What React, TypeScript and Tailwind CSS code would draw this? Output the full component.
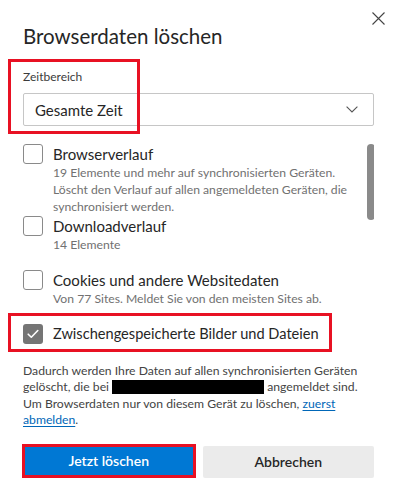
const Checkbox = ({ checked = false }: { checked?: boolean }) => {
	if (checked) {
		return (
			<span className="flex size-5 shrink-0 items-center justify-center rounded-[3px] bg-[#757575]">
				<svg width="12" height="10" viewBox="0 0 12 10" fill="none">
					<path d="M1.2 5.2 L4.3 8.2 L10.8 1.5" stroke="white" strokeWidth="1.6" strokeLinecap="round" strokeLinejoin="round" />
				</svg>
			</span>
		);
	}
	return <span className="size-5 shrink-0 rounded-[3px] border border-[#8a8a8a] bg-white" />;
};

const Option = ({ label, desc, className = "" }: { label: string; desc?: string; className?: string }) => {
	return (
		<div className={"flex gap-[10px] " + className}>
			<Checkbox />
			<div className="flex flex-col">
				<span className="text-[15px] leading-[20px] text-[#262626]">{label}</span>
				{desc && <span className="text-[12.2px] leading-[17px] text-[#717171]">{desc}</span>}
			</div>
		</div>
	);
};

const App = () => {
	return (
		<div className="relative h-[496px] w-[397px] overflow-hidden bg-white font-['Lato',sans-serif] text-[#262626]">
			<button className="absolute right-[12px] top-[12px] p-0">
				<svg width="13" height="13" viewBox="0 0 13 13" fill="none">
					<path d="M0.5 0.5 L12.5 12.5 M12.5 0.5 L0.5 12.5" stroke="#444" strokeWidth="1.1" />
				</svg>
			</button>

			<div className="flex flex-col px-[23px] pt-[22px]">
				<h1 className="text-[20.5px] leading-[28px] font-normal">Browserdaten löschen</h1>

				<div className="relative mt-[19px] flex flex-col">
					<span className="pointer-events-none absolute -left-[15px] -top-[10px] h-[75px] w-[132px] border-[3px] border-[#e81123]" />
					<span className="text-[12px] leading-[16px] text-[#3b3b3b]">Zeitbereich</span>
					<div className="mt-[8px] flex h-[33px] items-center justify-between rounded-[2px] border border-[#c6c6c6] pl-[11px] pr-[15px]">
						<span className="text-[15px] leading-[20px] text-[#262626]">Gesamte Zeit</span>
						<svg width="12" height="7" viewBox="0 0 12 7" fill="none">
							<path d="M0.6 0.6 L6 6 L11.4 0.6" stroke="#555" strokeWidth="1.1" />
						</svg>
					</div>
				</div>

				<div className="mt-[18px] flex h-[160px] overflow-hidden">
					<div className="flex flex-1 flex-col">
						<Option
							className="pb-[1px]"
							label="Browserverlauf"
							desc="19 Elemente und mehr auf synchronisierten Geräten. Löscht den Verlauf auf allen angemeldeten Geräten, die synchronisiert werden."
						/>
						<Option className="min-h-[54px]" label="Downloadverlauf" desc="14 Elemente" />
						<Option
							className="min-h-[54px]"
							label="Cookies und andere Websitedaten"
							desc="Von 77 Sites. Meldet Sie von den meisten Sites ab."
						/>
					</div>
					<div className="ml-[6px] mr-[-1px] w-[8px] shrink-0">
						<div className="h-[76px] w-[8px] rounded-full bg-[#8a8a8a]" />
					</div>
				</div>

				<div className="relative mt-[20px] flex h-[20px] items-center gap-[10px]">
					<span className="pointer-events-none absolute -left-[15px] -top-[11px] h-[39px] w-[324px] border-[3px] border-[#e81123]" />
					<Checkbox checked />
					<span className="text-[14.6px] leading-[20px] text-[#262626]">Zwischengespeicherte Bilder und Dateien</span>
				</div>

				<p className="mt-[19px] whitespace-nowrap text-[12.2px] leading-[16.3px] text-[#444]">
					Dadurch werden Ihre Daten auf allen synchronisierten Geräten
					<br />
					gelöscht, die bei <span className="inline-block h-[14px] w-[152px] bg-black align-[-3px]" /> angemeldet sind.
					<br />
					Um Browserdaten nur von diesem Gerät zu löschen,{" "}
					<a className="text-[#0067b8] underline underline-offset-2">
						zuerst
						<br />
						abmelden
					</a>
					.
				</p>

				<div className="mt-[16px] flex items-end gap-[7px]">
					<button className="-ml-[1px] flex h-[34px] w-[174px] items-center justify-center border-[3px] border-[#e81123] bg-[#0078d4] text-[14px] leading-[20px] font-semibold text-white">
						Jetzt löschen
					</button>
					<button className="flex h-[32px] w-[172px] items-center justify-center rounded-[2px] bg-[#ebebeb] text-[14px] leading-[20px] font-semibold text-[#262626]">
						Abbrechen
					</button>
				</div>
			</div>
		</div>
	);
};

export default App;
